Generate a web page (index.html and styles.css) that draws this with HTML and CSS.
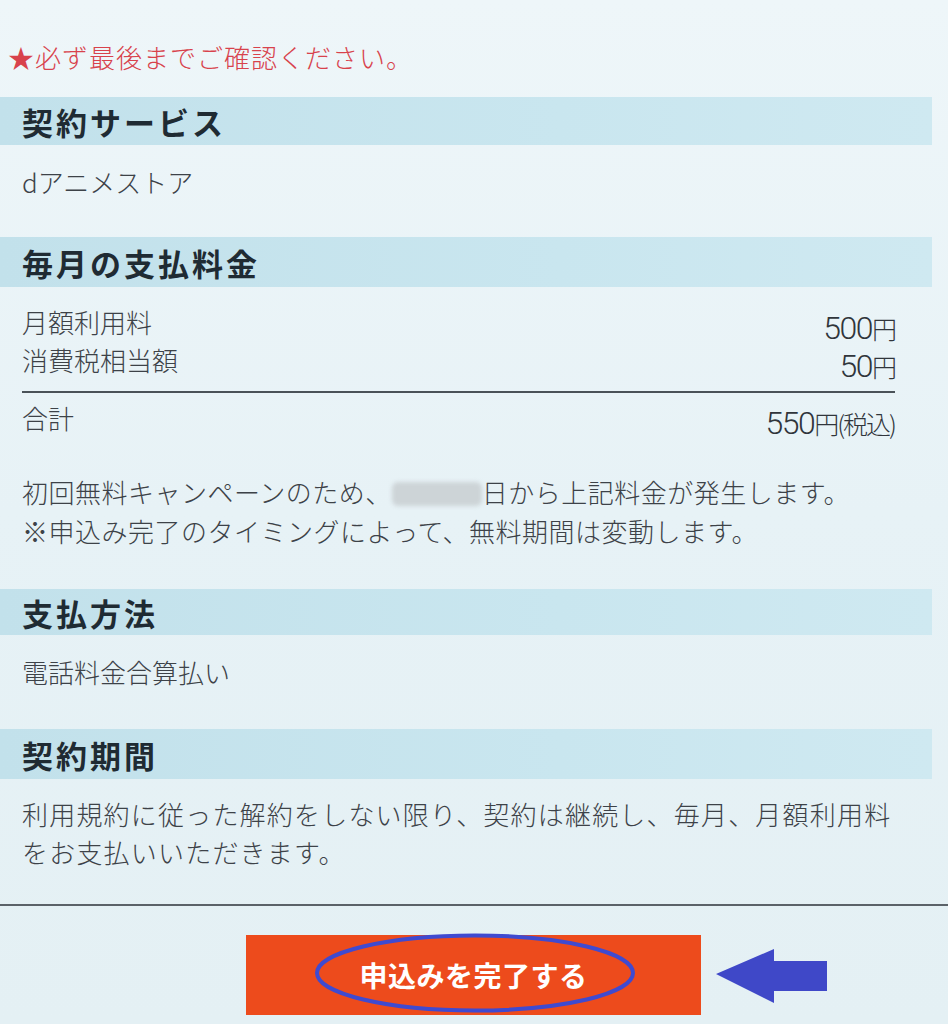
FILE: index.html
```html
<!DOCTYPE html>
<html lang="ja">
<head>
<meta charset="utf-8">
<title>確認</title>
<link rel="stylesheet" href="styles.css">
</head>
<body>
<div class="page">
  <p class="notice">★必ず最後までご確認ください。</p>

  <h2 class="band">契約サービス</h2>
  <div class="content">
    <p class="line">dアニメストア</p>
  </div>

  <h2 class="band band-2">毎月の支払料金</h2>
  <div class="content">
    <div class="row"><span>月額利用料</span><span class="price">500<span class="yen">円</span></span></div>
    <div class="row"><span>消費税相当額</span><span class="price">50<span class="yen">円</span></span></div>
    <div class="row total"><span>合計</span><span class="price">550<span class="yen">円(税込)</span></span></div>
    <p class="para">初回無料キャンペーンのため、<span class="blur"></span>日から上記料金が発生します。<br>※申込み完了のタイミングによって、無料期間は変動します。</p>
  </div>

  <h2 class="band band-3">支払方法</h2>
  <div class="content">
    <p class="line">電話料金合算払い</p>
  </div>

  <h2 class="band band-4">契約期間</h2>
  <div class="content">
    <p class="para2">利用規約に従った解約をしない限り、契約は継続し、毎月、月額利用料<br>をお支払いいただきます。</p>
  </div>

  <hr class="divider">

  <div class="footer">
    <div class="button">
      <span class="btn-text">申込みを完了する</span>
      <svg class="ring" width="330" height="82" viewBox="0 0 330 82"><ellipse cx="165" cy="40" rx="158" ry="37.5" fill="none" stroke="#3f4ad0" stroke-width="4"/></svg>
    </div>
    <svg class="arrow" width="113" height="55" viewBox="0 0 113 55"><polygon points="1,25 59,0 59,12 112,12 112,42 59,42 59,54" fill="#3f48c8"/></svg>
  </div>
</div>
</body>
</html>
```

FILE: styles.css
```css
html, body {
  margin: 0;
  padding: 0;
}
body {
  background: linear-gradient(180deg, #eef6f9 0%, #e7f2f6 50%, #e4f0f4 100%);
  font-family: "Noto Sans CJK JP", "Noto Sans", sans-serif;
  color: #3d4248;
  width: 948px;
  height: 1024px;
  overflow: hidden;
}
.page {
  padding-top: 37px;
}
.notice {
  margin: 0 0 20px 8px;
  font-size: 26px;
  line-height: 40px;
  color: #d8424c;
  letter-spacing: 1px;
  font-weight: 300;
}
.band {
  margin: 0 16px 0 0;
  height: 48px;
  padding-left: 22px;
  display: flex;
  align-items: center;
  background: linear-gradient(90deg, #c2e1eb 0%, #c9e6ef 60%, #cfe9f1 100%);
  font-size: 31px;
  font-weight: 700;
  color: #1f2b33;
  letter-spacing: 3px;
}
.band-2 { margin-top: 35px; height: 50px; }
.band-3 { margin-top: 39px; height: 46px; }
.band-4 { margin-top: 37px; height: 50px; }
.content {
  padding: 0 53px 0 22px;
  font-size: 26px;
  font-weight: 300;
}
.line {
  margin: 17px 0 0;
  line-height: 40px;
}
.row {
  display: flex;
  justify-content: space-between;
  align-items: flex-end;
  height: 38px;
}
.row:first-child { margin-top: 14px; }
.row span:first-child { line-height: 34px; }
.price {
  font-family: "Roboto", "Liberation Sans", sans-serif;
  font-size: 32px;
  font-weight: 300;
  letter-spacing: -1.5px;
  color: #30353b;
  line-height: 34px;
  position: relative;
  top: 6px;
}
.yen {
  font-family: "Noto Sans CJK JP", sans-serif;
  font-size: 25px;
  font-weight: 300;
  letter-spacing: -2px;
}
.total {
  border-top: 2px solid #4a5258;
  margin-top: 14px;
  height: 46px;
  align-items: center;
}
.total span:first-child { align-self: flex-start; line-height: 50px; }
.total .price { top: 7px; }
.para {
  margin: 33px 0 0;
  line-height: 39px;
  letter-spacing: 0.5px;
}
.para2 {
  margin: 16px 0 0;
  line-height: 38px;
  letter-spacing: 1.2px;
}
.blur {
  display: inline-block;
  width: 90px;
  height: 24px;
  vertical-align: -3px;
  background: #cdd4d7;
  border-radius: 6px;
  filter: blur(2px);
}
.divider {
  border: 0;
  border-top: 2px solid #5b6268;
  margin: 33px 0 0;
}
.footer {
  display: flex;
  align-items: center;
  padding-left: 246px;
  margin-top: 29px;
  gap: 14px;
}
.button {
  position: relative;
  width: 455px;
  height: 80px;
  background: #ed4b1c;
  display: flex;
  align-items: center;
  justify-content: center;
}
.btn-text {
  color: #fff;
  font-size: 28px;
  font-weight: 700;
  letter-spacing: 0.5px;
}
.ring {
  position: absolute;
  left: 64px;
  top: -2px;
}
.arrow {
  display: block;
  margin-top: 2px;
}
```
